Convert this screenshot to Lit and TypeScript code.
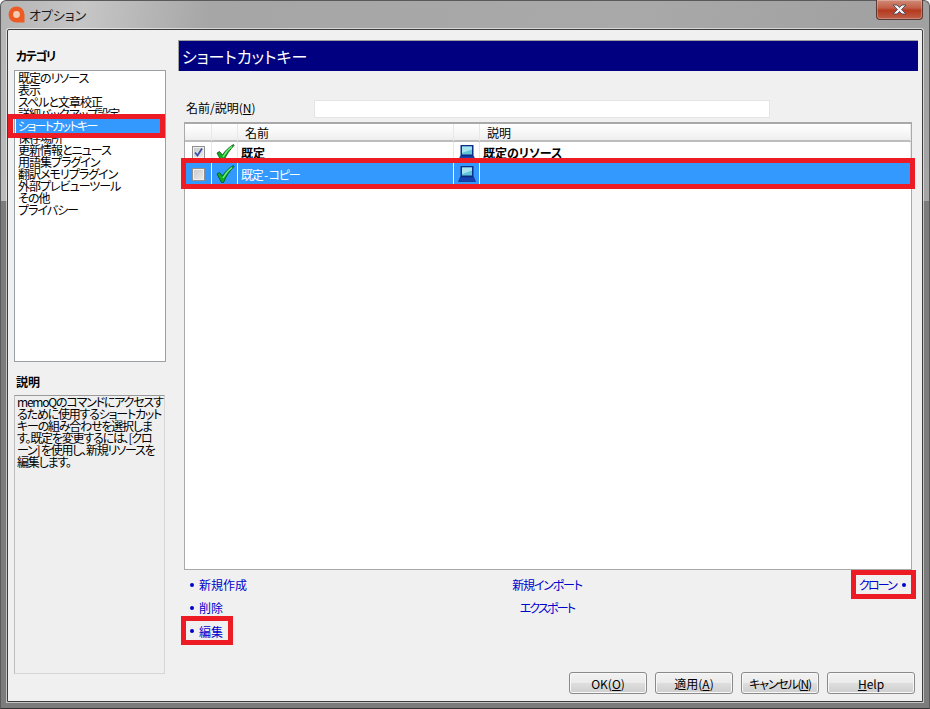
import { LitElement, html, css, svg } from "lit";
import { customElement } from "lit/decorators.js";

const categories = [
  "既定のリソース", "表示", "スペルと文章校正", "詳細バックアップ設定", "ショートカットキー",
  "保存場所", "更新情報とニュース", "用語集プラグイン", "翻訳メモリプラグイン",
  "外部プレビューツール", "その他", "プライバシー",
];

const descLines = [
  "memoQのコマンドにアクセスす",
  "るために使用するショートカット",
  "キーの組み合わせを選択しま",
  "す。既定を変更するには、[クロ",
  "ーン] を使用し、新規リソースを",
  "編集します。",
];

const check = html`<svg class="ico" width="20" height="20" viewBox="0 0 20 20">
  <path d="M2 10 L4.5 8.5 L7.5 12 C10 8 14 4 18.5 1.5 L19 2.5 C15 6.5 11 12 8.5 18.5 L6.5 18.5 Z" fill="#0fae20" stroke="#04500c" stroke-width=".8"/>
  <path d="M8 14 C10.5 9.5 13.5 6 17 3.5" fill="none" stroke="#6bf076" stroke-width="1.3"/>
</svg>`;

const computer = html`<svg class="ico" width="18" height="18" viewBox="0 0 18 18">
  <rect x="2.5" y="1" width="13" height="11" fill="#0b2f8c"/>
  <rect x="4" y="2.5" width="10" height="8" fill="#5fc4d8"/>
  <path d="M4 2.5h10v3L4 9z" fill="#a8e4ee"/>
  <path d="M2.5 12h13l2 4.5H.5z" fill="#1542b0" stroke="#0b2170" stroke-width=".6"/>
</svg>`;

function box(checked: boolean) {
  return html`<span class="box">${checked
    ? svg`<svg width="11" height="11" viewBox="0 0 11 11"><path d="M2 5.5 L4.5 8.5 L9 1.5" fill="none" stroke="#3a4fa8" stroke-width="1.8"/></svg>`
    : ""}</span>`;
}

@customElement("app-root")
export class AppRoot extends LitElement {
  static styles = css`
    :host {
      display: block;
      width: 930px;
      height: 709px;
      font-family: "Noto Sans CJK JP", "Liberation Sans", sans-serif;
      font-size: 12px;
      font-feature-settings: "palt";
      color: #000;
      overflow: hidden;
    }
    * { box-sizing: border-box; }
    .frame {
      position: relative;
      width: 930px;
      height: 709px;
      display: flex;
      flex-direction: column;
      padding: 0 6px 6px;
      background: linear-gradient(100deg, #b4b4b4 0%, #c6c6c6 8%, #a6a6a6 20%, #a9a9a9 60%, #a0a0a0 88%, #b4b4b4 100%);
      border: 1px solid #5a5a5a;
      border-bottom: 1px solid #333;
      border-radius: 6px 6px 0 0;
    }
    .frame::after {
      content: "";
      position: absolute;
      inset: 200px 0 0 0;
      border-left: 6px solid #7c7c7c;
      border-right: 6px solid #7c7c7c;
      border-bottom: 6px solid #7c7c7c;
      pointer-events: none;
    }
    .title {
      height: 28px;
      flex: none;
      display: flex;
      align-items: center;
      gap: 4px;
      padding: 0 0 2px 1px;
      font-size: 13px;
      color: #1a1a1a;
    }
    .close {
      position: absolute;
      top: -1px;
      right: 6px;
      width: 47px;
      height: 20px;
      border: 1px solid #5a3a35;
      border-top: none;
      border-radius: 0 0 4px 4px;
      background: linear-gradient(#cf8a76 0%, #c4604a 40%, #b53a1e 55%, #c0604a 100%);
      display: flex;
      align-items: center;
      justify-content: center;
      box-shadow: inset 0 0 0 1px rgba(255,255,255,.25);
      z-index: 2;
    }
    .client {
      flex: 1;
      position: relative;
      z-index: 1;
      display: flex;
      gap: 12px;
      background: #f0f0f0;
      border: 1px solid #3c3c3c;
      border-radius: 2px 2px 0 0;
      box-shadow: 0 0 0 1px rgba(255,255,255,.55);
      padding: 10px 4px 0 6px;
    }
    .left {
      width: 152px;
      flex: none;
      display: flex;
      flex-direction: column;
    }
    .head {
      height: 30px;
      font-weight: 700;
      line-height: 32px;
      padding-left: 2px;
      letter-spacing: -1.4px;
      flex: none;
    }
    .list {
      height: 292px;
      flex: none;
      background: #fff;
      border: 1px solid #9a9fa8;
      padding: 1px 1px 0 1px;
      line-height: 12px;
      letter-spacing: -1px;
    }
    .cat {
      height: 12px;
      padding-left: 2px;
      white-space: nowrap;
      overflow: hidden;
    }
    .cat.sel {
      background: #3399ff;
      color: #fff;
      height: 14px;
      margin: -1px 4px -1px 0;
      position: relative;
      line-height: 14px;
      letter-spacing: -1.7px;
    }
    .dhead { height: 33px; line-height: 39px; padding-left: 2px; font-weight: 700; flex: none; }
    .desc {
      height: 279px;
      width: 151px;
      flex: none;
      background: #efefef;
      border-top: 1px solid #9a9a9a;
      border-left: 1px solid #bdbdbd;
      border-right: 1px solid #d6d6d6;
      border-bottom: 1px solid #d6d6d6;
      padding: 0 2px;
      line-height: 12px;
      letter-spacing: -1.2px;
      white-space: nowrap;
    }
    .right {
      flex: 1;
      display: flex;
      flex-direction: column;
      min-width: 0;
    }
    .banner {
      height: 31px;
      flex: none;
      background: #000080;
      color: #fff;
      font-size: 16px;
      line-height: 30px;
      padding-left: 3px;
      border-top: 1px solid #a0a0a0;
      border-left: 1px solid #a0a0a0;
    }
    .field {
      height: 26px;
      margin-top: 25px;
      padding-left: 8px;
      display: flex;
      align-items: center;
      flex: none;
    }
    .field label { width: 128px; padding-bottom: 3px; }
    .field u { text-underline-offset: 1px; }
    .field .inp {
      width: 456px;
      height: 18px;
      background: #fff;
      border: 1px solid #e4e4e4;
    }
    .grid {
      margin-left: 6px;
      width: 728px;
      height: 448px;
      flex: none;
      background: #fff;
      border: 1px solid #a9a9a9;
      border-top: 2px solid #a9a9a9;
      display: flex;
      flex-direction: column;
    }
    .row {
      display: grid;
      grid-template-columns: 27px 26px 216px 26px 1fr;
      flex: none;
    }
    .row > div {
      display: flex;
      align-items: center;
      justify-content: center;
      border-right: 1px solid #e8e8e8;
      min-width: 0;
    }
    .row > div.txt { justify-content: flex-start; padding-left: 3px; white-space: nowrap; }
    .row.hdr {
      height: 18px;
      background: linear-gradient(#fff 0%, #f8f8f8 50%, #eeeeee 100%);
      border-bottom: 2px solid #bdbdbd;
    }
    .row.hdr > div.txt { padding-left: 7px; }
    .row.r1 { height: 21px; font-weight: 700; }
    .row.r2 { height: 22px; background: #3399ff; color: #fff; }
    .row.r2 > div { border-right: 1px solid #fff; }
    .ico { display: block; }
    .box {
      width: 13px;
      height: 13px;
      border: 1px solid #8f8f8f;
      background: linear-gradient(135deg, #c8c8c8, #ececec);
      display: flex;
      align-items: center;
      justify-content: center;
      box-shadow: inset 0 0 0 1px #f0f0f0;
    }
    .k { letter-spacing: -1.2px; }
    .kk { letter-spacing: -1.8px; }
    .links {
      margin-left: 6px;
      display: grid;
      grid-template-columns: 1fr 1fr 1fr;
      grid-template-rows: 23px 23px 24px;
      width: 726px;
      padding-top: 3px;
      color: #0000cc;
      flex: none;
    }
    .link { display: flex; align-items: center; gap: 4px; white-space: nowrap; }
    .link.l { padding-left: 6px; }
    .link.c { justify-content: center; }
    .link.r { justify-content: flex-end; padding-right: 3px; gap: 6px; }
    .dot { width: 4px; height: 4px; border-radius: 50%; background: #0000cc; flex: none; margin-right: 1px; }
    .btns {
      position: absolute;
      right: 7px;
      bottom: 7px;
      display: flex;
      gap: 8px;
    }
    .btn {
      width: 78px;
      height: 22px;
      border: 1px solid #8a8a8a;
      border-radius: 3px;
      background: linear-gradient(#f2f2f2 0%, #ebebeb 48%, #dddddd 52%, #cfcfcf 100%);
      box-shadow: inset 0 0 0 1px #f8f8f8;
      display: flex;
      align-items: center;
      justify-content: center;
      white-space: nowrap;
    }
    .btn.help { width: 88px; }
    .red {
      position: absolute;
      border: 5px solid #ed1c24;
      pointer-events: none;
      z-index: 3;
    }
    .rd1 { left: 0px; top: 84px; width: 157px; height: 24px; }
    .rd2 { left: 173px; top: 128px; width: 734px; height: 31px; }
    .rd3 { left: 173px; top: 586px; width: 52px; height: 29px; }
    .rd4 { left: 843px; top: 540px; width: 65px; height: 29px; }
  `;

  render() {
    return html`
      <div class="frame">
        <div class="title">
          <svg width="17" height="17" viewBox="0 0 17 17">
            <path d="M8.5 .5a8 8 0 0 1 8 8v8h-8a8 8 0 0 1 0-16z" fill="#ee5a24"/>
            <circle cx="8.5" cy="8.5" r="3.4" fill="#f6cbb4"/>
          </svg>
          <span>オプション</span>
        </div>
        <div class="close">
          <svg width="15" height="11" viewBox="0 0 15 11">
            <path d="M1 1h4l2.5 2.5L10 1h4L9.5 5.5 14 10h-4L7.5 7.5 5 10H1l4.5-4.5z" fill="#f2f2f6" stroke="#4a4a5a" stroke-width=".9"/>
          </svg>
        </div>
        <div class="client">
          <div class="left">
            <div class="head">カテゴリ</div>
            <div class="list">
              ${categories.map((c) => html`<div class="cat ${c === "ショートカットキー" ? "sel" : ""}">${c}</div>`)}
            </div>
            <div class="dhead">説明</div>
            <div class="desc">${descLines.map((l) => html`<div>${l}</div>`)}</div>
          </div>
          <div class="right">
            <div class="banner">ショートカットキー</div>
            <div class="field">
              <label>名前/説明(<u>N</u>)</label>
              <div class="inp"></div>
            </div>
            <div class="grid">
              <div class="row hdr">
                <div></div><div></div><div class="txt">名前</div><div></div><div class="txt">説明</div>
              </div>
              <div class="row r1">
                <div>${box(true)}</div><div>${check}</div><div class="txt">既定</div><div>${computer}</div><div class="txt">既定のリソース</div>
              </div>
              <div class="row r2">
                <div>${box(false)}</div><div>${check}</div><div class="txt"><span class="k">既定 - コピー</span></div><div>${computer}</div><div class="txt"></div>
              </div>
            </div>
            <div class="links">
              <div class="link l"><i class="dot"></i>新規作成</div>
              <div class="link c"><span class="k">新規インポート</span></div>
              <div class="link r"><span class="kk">クローン</span><i class="dot"></i></div>
              <div class="link l"><i class="dot"></i>削除</div>
              <div class="link c"><span class="kk">エクスポート</span></div>
              <div></div>
              <div class="link l"><i class="dot"></i>編集</div>
            </div>
          </div>
          <div class="btns">
            <div class="btn">OK(<u>O</u>)</div>
            <div class="btn">適用(<u>A</u>)</div>
            <div class="btn"><span class="k">キャンセル(<u>N</u>)</span></div>
            <div class="btn help"><u>H</u>elp</div>
          </div>
          <div class="red rd1"></div>
          <div class="red rd2"></div>
          <div class="red rd3"></div>
          <div class="red rd4"></div>
        </div>
      </div>
    `;
  }
}
